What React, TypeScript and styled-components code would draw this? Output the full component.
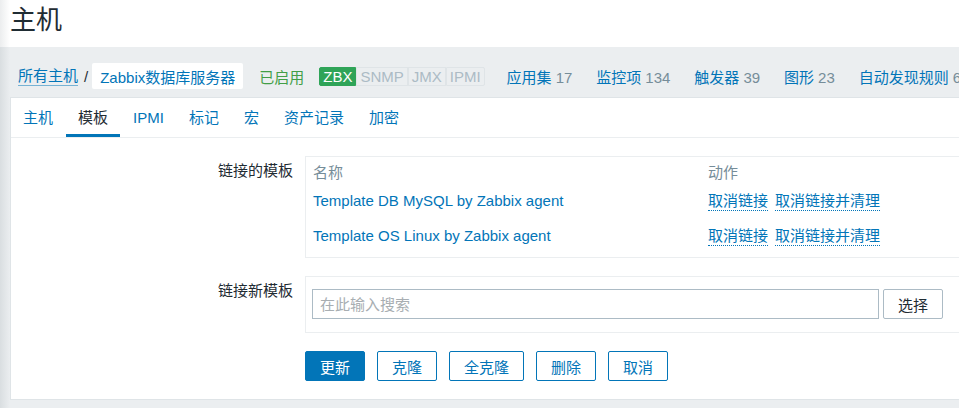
import React from "react";
import styled, { createGlobalStyle } from "styled-components";

const GlobalStyle = createGlobalStyle`
  html, body {
    margin: 0;
    padding: 0;
    background: #ebeef0;
    overflow: hidden;
  }
  body {
    font-family: "Liberation Sans", Arial, "Noto Sans CJK SC", sans-serif;
    font-size: 15px;
    color: #1f2c33;
  }
  * { box-sizing: border-box; }
`;

const BLUE = "#0275b8";

const Page = styled.div`
  position: relative;
  width: 1200px;
  min-height: 408px;
  background: #ebeef0;
`;

const SideShadow = styled.div`
  position: absolute;
  left: 0;
  top: 0;
  bottom: 0;
  width: 10px;
  background: linear-gradient(to right, rgba(40, 60, 70, 0.09), rgba(40, 60, 70, 0));
  pointer-events: none;
  z-index: 5;
`;

const Header = styled.header`
  height: 47px;
  background: #ffffff;
  padding-left: 10px;
`;

const Title = styled.h1`
  margin: 0;
  font-size: 26px;
  font-weight: normal;
  line-height: 40px;
  color: #1f2c33;
`;

const Main = styled.main`
  padding-left: 10px;
`;

const Nav = styled.nav`
  display: flex;
  align-items: center;
  height: 50px;
  padding: 16px 0 8px 8px;
  white-space: nowrap;
`;

const CrumbLink = styled.a`
  color: ${BLUE};
  text-decoration: none;
  line-height: 18px;
  border-bottom: 1px solid rgba(2, 117, 184, 0.5);
`;

const Sep = styled.span`
  margin: 0 4px 0 6px;
  color: #1f2c33;
`;

const CrumbBox = styled.span`
  display: inline-flex;
  align-items: center;
  height: 26px;
  padding: 0 8px;
  background: #ffffff;
  border-radius: 2px;
  color: ${BLUE};
`;

const Status = styled.span`
  margin-left: 16px;
  color: #429e47;
`;

const Badges = styled.span`
  display: inline-flex;
  margin-left: 15px;
  margin-right: 22px;
`;

const Badge = styled.span<{ $on?: boolean }>`
  display: inline-flex;
  align-items: center;
  height: 19px;
  padding: 0 3px;
  border: 1px solid ${(p) => (p.$on ? "#2fa458" : "#dfe4e7")};
  background: ${(p) => (p.$on ? "#2fa458" : "#ebeef0")};
  color: ${(p) => (p.$on ? "#ffffff" : "#acbbc5")};
  &:first-child { border-radius: 2px 0 0 2px; }
  &:last-child { border-radius: 0 2px 2px 0; }
`;

const NavItem = styled.span`
  margin-right: 24px;
`;

const NavLink = styled.a`
  color: ${BLUE};
  text-decoration: none;
`;

const Count = styled.span`
  color: #768d99;
  margin-left: 4px;
`;

const Panel = styled.section`
  background: #ffffff;
  border: 1px solid #dfe4e7;
  border-right: none;
`;

const Tabs = styled.ul`
  display: flex;
  list-style: none;
  margin: 0;
  padding: 0;
  border-bottom: 1px solid #ebeef0;
`;

const Tab = styled.li<{ $active?: boolean }>`
  height: 39px;
  padding: 3px 12px 0;
  line-height: 33px;
  color: ${(p) => (p.$active ? "#1f2c33" : BLUE)};
  border-bottom: 3px solid ${(p) => (p.$active ? BLUE : "transparent")};
  margin-right: 1px;
`;

const Form = styled.div`
  display: flex;
  flex-direction: column;
  gap: 18px;
  padding: 18px 0 18px;
`;

const Row = styled.div`
  display: grid;
  grid-template-columns: 282px 720px;
  column-gap: 12px;
`;

const Label = styled.div`
  text-align: right;
  padding-top: 5px;
  line-height: 20px;
`;

const FieldBox = styled.div`
  border: 1px solid #ebeef0;
`;

const TemplatesBox = styled(FieldBox)`
  padding: 6px 7px 4px;
`;

const TableGrid = styled.div`
  display: grid;
  grid-template-columns: 395px 1fr;
`;

const Th = styled.div`
  color: #768d99;
  line-height: 20px;
`;

const Td = styled.div`
  height: 35px;
  display: flex;
  align-items: center;
  gap: 7px;
`;

const TemplateLink = styled.a`
  color: ${BLUE};
  text-decoration: none;
`;

const ActionLink = styled.a`
  color: ${BLUE};
  text-decoration: none;
  line-height: 19px;
  border-bottom: 1px dotted ${BLUE};
`;

const SearchBox = styled(FieldBox)`
  display: flex;
  gap: 4px;
  padding: 12px 6px 13px;
`;

const Input = styled.input`
  width: 567px;
  height: 30px;
  padding: 0 7px;
  border: 1px solid #acbbc5;
  font: inherit;
  color: #1f2c33;
  outline: none;
  &::placeholder { color: #a8aeb2; }
`;

const SelectButton = styled.button`
  width: 60px;
  height: 30px;
  border: 1px solid #acbbc5;
  border-radius: 2px;
  background: #ffffff;
  font: inherit;
  color: #1f2c33;
  padding: 0;
`;

const Buttons = styled.div`
  display: flex;
  gap: 12px;
  grid-column: 2;
`;

const Button = styled.button<{ $primary?: boolean }>`
  height: 30px;
  padding: 0 14px;
  border: 1px solid ${BLUE};
  border-radius: 2px;
  background: ${(p) => (p.$primary ? BLUE : "#ffffff")};
  color: ${(p) => (p.$primary ? "#ffffff" : BLUE)};
  font: inherit;
`;

const navItems = [
  { name: "应用集", count: 17 },
  { name: "监控项", count: 134 },
  { name: "触发器", count: 39 },
  { name: "图形", count: 23 },
  { name: "自动发现规则", count: 6 },
];

const tabs = ["主机", "模板", "IPMI", "标记", "宏", "资产记录", "加密"];

const templates = [
  "Template DB MySQL by Zabbix agent",
  "Template OS Linux by Zabbix agent",
];

export default function App() {
  return (
    <Page>
      <GlobalStyle />
      <SideShadow />
      <Header>
        <Title>主机</Title>
      </Header>
      <Main>
        <Nav>
          <CrumbLink>所有主机</CrumbLink>
          <Sep>/</Sep>
          <CrumbBox>Zabbix数据库服务器</CrumbBox>
          <Status>已启用</Status>
          <Badges>
            <Badge $on>ZBX</Badge>
            <Badge>SNMP</Badge>
            <Badge>JMX</Badge>
            <Badge>IPMI</Badge>
          </Badges>
          {navItems.map((n) => (
            <NavItem key={n.name}>
              <NavLink>{n.name}</NavLink>
              <Count>{n.count}</Count>
            </NavItem>
          ))}
        </Nav>
        <Panel>
          <Tabs>
            {tabs.map((t) => (
              <Tab key={t} $active={t === "模板"}>
                {t}
              </Tab>
            ))}
          </Tabs>
          <Form>
            <Row>
              <Label>链接的模板</Label>
              <TemplatesBox>
                <TableGrid>
                  <Th>名称</Th>
                  <Th>动作</Th>
                  {templates.map((t) => (
                    <React.Fragment key={t}>
                      <Td>
                        <TemplateLink>{t}</TemplateLink>
                      </Td>
                      <Td>
                        <ActionLink>取消链接</ActionLink>
                        <ActionLink>取消链接并清理</ActionLink>
                      </Td>
                    </React.Fragment>
                  ))}
                </TableGrid>
              </TemplatesBox>
            </Row>
            <Row>
              <Label>链接新模板</Label>
              <SearchBox>
                <Input placeholder="在此输入搜索" />
                <SelectButton>选择</SelectButton>
              </SearchBox>
            </Row>
            <Row>
              <Buttons>
                <Button $primary>更新</Button>
                <Button>克隆</Button>
                <Button>全克隆</Button>
                <Button>删除</Button>
                <Button>取消</Button>
              </Buttons>
            </Row>
          </Form>
        </Panel>
      </Main>
    </Page>
  );
}
